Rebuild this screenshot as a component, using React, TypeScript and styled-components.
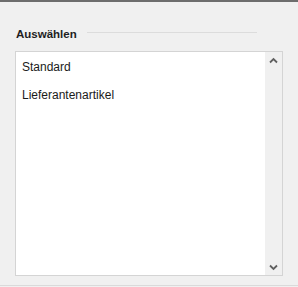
import React from "react";
import styled, { createGlobalStyle } from "styled-components";

const GlobalStyle = createGlobalStyle`
  html, body {
    margin: 0;
    padding: 0;
    background: #f0f0f0;
  }
  body {
    font-family: "Liberation Sans", Arial, sans-serif;
  }
`;

const Panel = styled.div`
  width: 298px;
  height: 287px;
  box-sizing: border-box;
  border-top: 2px solid #6d6d6d;
  background: #f0f0f0;
  display: flex;
  flex-direction: column;
  overflow: hidden;
`;

const Body = styled.div`
  flex: 1;
  padding: 0 15px 0 15px;
  display: flex;
  flex-direction: column;
  border-bottom: 1px solid #dadada;
  margin-bottom: 1px;
`;

const Header = styled.div`
  display: flex;
  align-items: center;
  height: 20px;
  margin-top: 22px;
  padding-left: 1px;
  gap: 10px;
  width: 241px;
`;

const Title = styled.span`
  font-size: 11.5px;
  font-weight: 700;
  color: #1e1e1e;
  white-space: nowrap;
`;

const Rule = styled.div`
  flex: 1;
  height: 1px;
  background: #dcdcdc;
  margin-top: -3px;
`;

const ListBox = styled.div`
  margin-top: 7px;
  width: 268px;
  height: 225px;
  box-sizing: border-box;
  border: 1px solid #d4d4d4;
  background: #ffffff;
  display: flex;
`;

const Items = styled.ul`
  flex: 1;
  list-style: none;
  margin: 0;
  padding: 1px 0 0 6px;
`;

const Item = styled.li`
  height: 28px;
  display: flex;
  align-items: center;
  font-size: 12px;
  color: #1a1a1a;
`;

const ScrollBar = styled.div`
  width: 17px;
  background: #f0f0f0;
  display: flex;
  flex-direction: column;
  justify-content: space-between;
  align-items: center;
  padding: 5px 0 4px;
`;

const Arrow = styled.svg`
  width: 9px;
  height: 7px;
  display: block;
`;

const UpArrow = () => (
  <Arrow viewBox="0 0 9 7">
    <path d="M1 5.5 L4.5 2 L8 5.5" fill="none" stroke="#606060" strokeWidth="1.8" />
  </Arrow>
);

const DownArrow = () => (
  <Arrow viewBox="0 0 9 7">
    <path d="M1 1.5 L4.5 5 L8 1.5" fill="none" stroke="#606060" strokeWidth="1.8" />
  </Arrow>
);

export default function App() {
  return (
    <>
      <GlobalStyle />
      <Panel>
        <Body>
          <Header>
            <Title>Auswählen</Title>
            <Rule />
          </Header>
          <ListBox>
            <Items>
              <Item>Standard</Item>
              <Item>Lieferantenartikel</Item>
            </Items>
            <ScrollBar>
              <UpArrow />
              <DownArrow />
            </ScrollBar>
          </ListBox>
        </Body>
      </Panel>
    </>
  );
}
